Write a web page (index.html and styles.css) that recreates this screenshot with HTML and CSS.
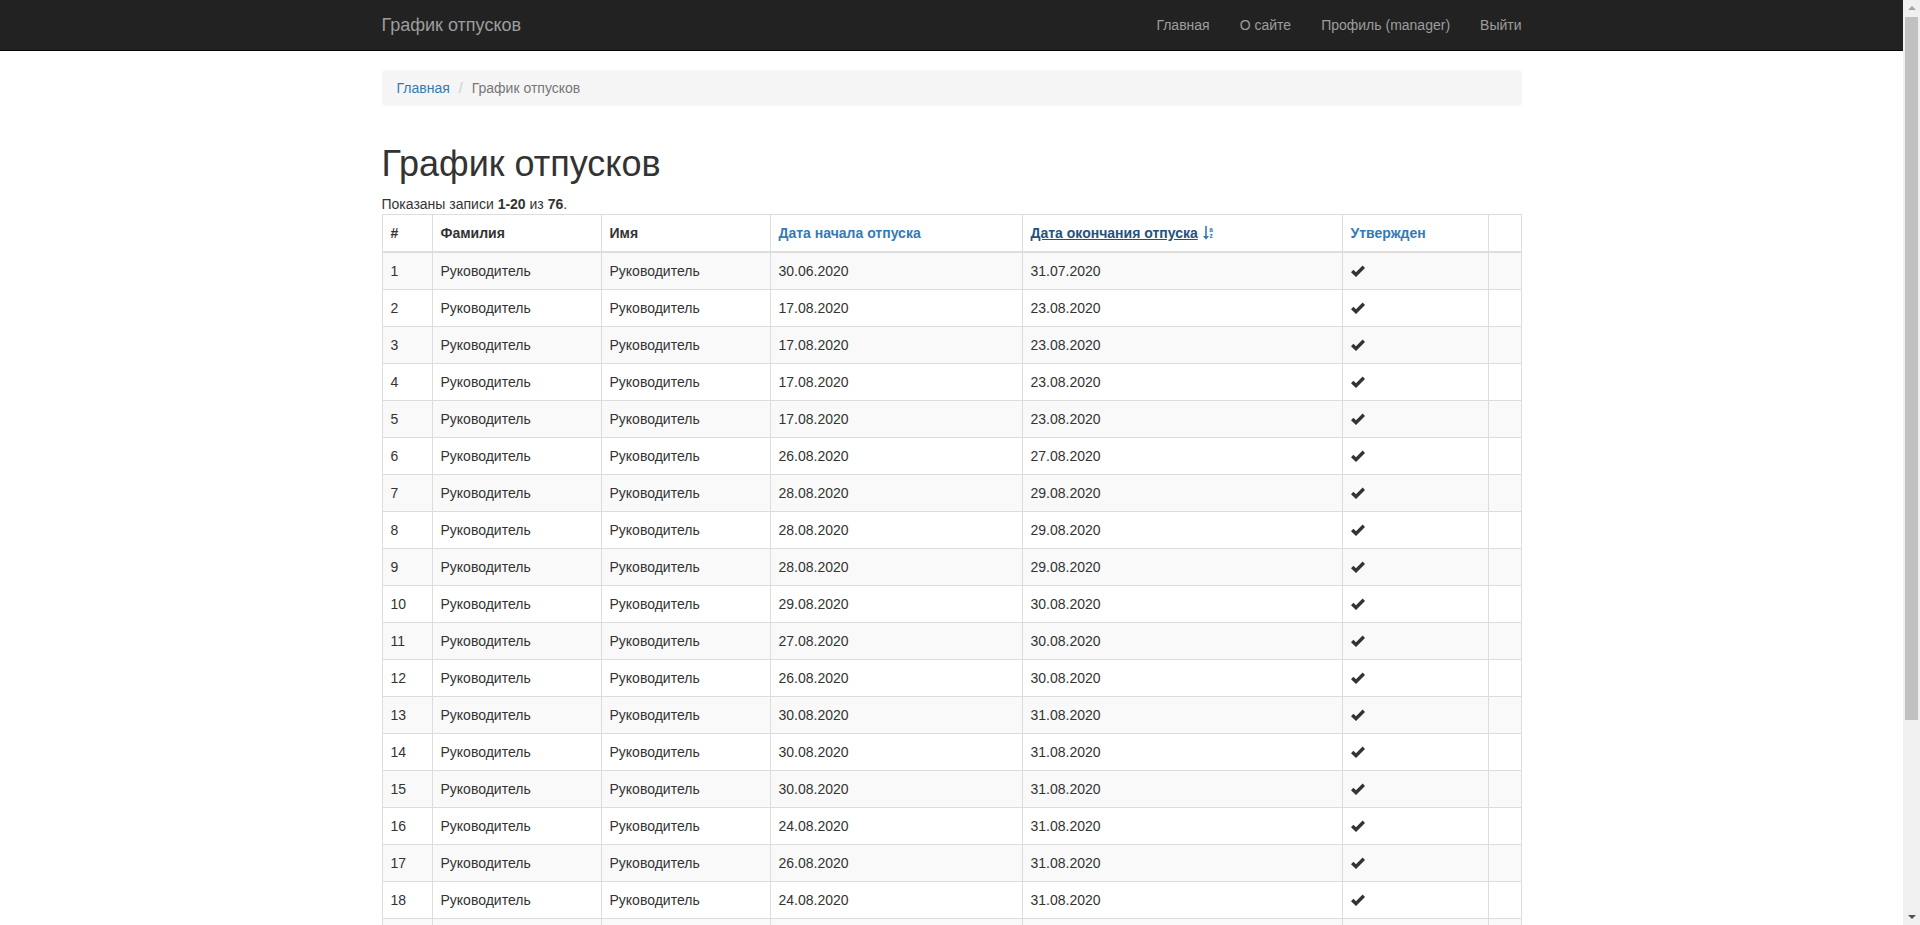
FILE: index.html
```html
<!DOCTYPE html>
<html lang="ru">
<head>
<meta charset="utf-8">
<title>График отпусков</title>
<link rel="stylesheet" href="styles.css">
</head>
<body>
<nav class="navbar">
  <div class="container navbar-inner">
    <a class="brand" href="#">График отпусков</a>
    <ul class="nav">
      <li><a href="#">Главная</a></li>
      <li><a href="#">О сайте</a></li>
      <li><a href="#">Профиль (manager)</a></li>
      <li><a href="#">Выйти</a></li>
    </ul>
  </div>
</nav>
<div class="container main">
  <ul class="breadcrumb">
    <li><a href="#">Главная</a></li>
    <li class="active">График отпусков</li>
  </ul>
  <div class="vacation-index">
    <h1>График отпусков</h1>
    <div class="summary">Показаны записи <b>1-20</b> из <b>76</b>.</div>
    <table class="grid">
      <colgroup>
        <col class="c-num"><col class="c-last"><col class="c-first"><col class="c-start"><col class="c-end"><col class="c-ok"><col class="c-act">
      </colgroup>
      <thead>
        <tr>
          <th>#</th>
          <th>Фамилия</th>
          <th>Имя</th>
          <th><a href="#">Дата начала отпуска</a></th>
          <th><a class="sorted" href="#">Дата окончания отпуска</a> <svg class="sort-icon" width="11" height="14" viewBox="0 0 11 14"><path d="M2.2 0h1.6v10h2.2L3 13.8 0 10h2.2z" fill="#337ab7"/><text x="6.3" y="5.5" font-size="6.5" font-family="Liberation Sans, sans-serif" font-weight="bold" fill="#337ab7">a</text><text x="6.5" y="12" font-size="6.5" font-family="Liberation Sans, sans-serif" font-weight="bold" fill="#337ab7">z</text></svg></th>
          <th><a href="#">Утвержден</a></th>
          <th class="act"></th>
        </tr>
      </thead>
      <tbody id="rows"></tbody>
    </table>
    <ul class="pagination">
      <li class="disabled"><span>&laquo;</span></li>
      <li class="active"><a href="#">1</a></li>
      <li><a href="#">2</a></li>
      <li><a href="#">3</a></li>
      <li><a href="#">4</a></li>
      <li><a href="#">&raquo;</a></li>
    </ul>
  </div>
</div>
<div class="fake-scrollbar" aria-hidden="true">
  <span class="sb-up"></span>
  <span class="sb-thumb"></span>
  <span class="sb-down"></span>
</div>
<script>
const data = [
 ["30.06.2020","31.07.2020"],["17.08.2020","23.08.2020"],["17.08.2020","23.08.2020"],["17.08.2020","23.08.2020"],
 ["17.08.2020","23.08.2020"],["26.08.2020","27.08.2020"],["28.08.2020","29.08.2020"],["28.08.2020","29.08.2020"],
 ["28.08.2020","29.08.2020"],["29.08.2020","30.08.2020"],["27.08.2020","30.08.2020"],["26.08.2020","30.08.2020"],
 ["30.08.2020","31.08.2020"],["30.08.2020","31.08.2020"],["30.08.2020","31.08.2020"],["24.08.2020","31.08.2020"],
 ["26.08.2020","31.08.2020"],["24.08.2020","31.08.2020"],["25.08.2020","31.08.2020"],["27.08.2020","31.08.2020"]
];
const check = '<svg class="ok" width="14" height="12" viewBox="0 0 14 12"><path d="M0 7.2 2.4 4.8 5 7.3 11.6 0.6 14 3 5 12z" fill="#333"/></svg>';
const tb = document.getElementById('rows');
tb.innerHTML = data.map((d,i)=>`<tr><td>${i+1}</td><td>Руководитель</td><td>Руководитель</td><td>${d[0]}</td><td>${d[1]}</td><td>${check}</td><td></td></tr>`).join('');
</script>
</body>
</html>
```
FILE: styles.css
```css
body {
  margin: 0;
  padding-right: 17px;
  font-family: "Liberation Sans", Arial, Helvetica, sans-serif;
  font-size: 14px;
  line-height: 20px;
  color: #333;
  background: #fff;
}
a { color: #337ab7; text-decoration: none; }
.container {
  width: 1140px;
  margin: 0 auto;
  padding: 0 15px;
}
.navbar {
  position: fixed;
  top: 0; left: 0; right: 17px;
  height: 50px;
  background: #222;
  border-bottom: 1px solid #080808;
  z-index: 10;
}
.navbar-inner {
  display: flex;
  justify-content: space-between;
  height: 50px;
}
.brand {
  font-size: 18px;
  line-height: 20px;
  padding: 15px 0;
  color: #9d9d9d;
}
.nav {
  list-style: none;
  margin: 0 -15px 0 0;
  padding: 0;
  display: flex;
}
.nav a {
  display: block;
  padding: 15px;
  color: #9d9d9d;
  line-height: 20px;
}
.main { padding-top: 70px; padding-bottom: 20px; }
.breadcrumb {
  list-style: none;
  margin: 0 0 20px;
  padding: 8px 15px;
  background: #f5f5f5;
  border-radius: 4px;
  display: flex;
}
.breadcrumb li.active { color: #777; }
.breadcrumb li + li::before {
  content: "/";
  padding: 0 9px 0 9px;
  color: #ccc;
}
h1 {
  font-size: 36px;
  font-weight: 500;
  line-height: 1.1;
  margin: 38px 0 10px;
}
.grid {
  width: 100%;
  table-layout: fixed;
  border-collapse: collapse;
  border: 1px solid #ddd;
  margin-bottom: 20px;
}
.c-num { width: 50px; }
.c-last { width: 169px; }
.c-first { width: 169px; }
.c-start { width: 252px; }
.c-end { width: 320px; }
.c-ok { width: 146px; }
.grid th, .grid td {
  padding: 8px;
  border: 1px solid #ddd;
  text-align: left;
  vertical-align: top;
  line-height: 20px;
}
.grid th { font-weight: bold; border-bottom-width: 2px; }
.grid tbody tr:nth-child(odd) { background: #f9f9f9; }
.grid a.sorted { color: #23527c; text-decoration: underline; }
.sort-icon { vertical-align: -2px; margin-left: 1px; }
.ok { vertical-align: -1px; }
.pagination {
  list-style: none;
  display: flex;
  padding: 0;
  margin: 20px 0;
}
.pagination li > a, .pagination li > span {
  display: block;
  padding: 6px 12px;
  border: 1px solid #ddd;
  margin-left: -1px;
  line-height: 20px;
  color: #337ab7;
}
.pagination li:first-child > span { margin-left: 0; border-radius: 4px 0 0 4px; color: #777; }
.pagination li:last-child > a { border-radius: 0 4px 4px 0; }
.pagination li.active > a { background: #337ab7; border-color: #337ab7; color: #fff; }

/* overlay mimicking the browser's vertical scrollbar */
.fake-scrollbar {
  position: fixed;
  top: 0;
  right: 0;
  bottom: 0;
  width: 17px;
  background: #f0f0f0;
  z-index: 20;
  display: flex;
  flex-direction: column;
  align-items: center;
}
.sb-up, .sb-down {
  width: 0;
  height: 0;
  border-left: 4px solid transparent;
  border-right: 4px solid transparent;
}
.sb-up {
  margin-top: 6px;
  border-bottom: 4px solid #a3a3a3;
}
.sb-thumb {
  width: 13px;
  height: 703px;
  margin-top: 7px;
  background: #c1c1c1;
}
.sb-down {
  margin-top: auto;
  margin-bottom: 6px;
  border-top: 4px solid #505050;
}
```
